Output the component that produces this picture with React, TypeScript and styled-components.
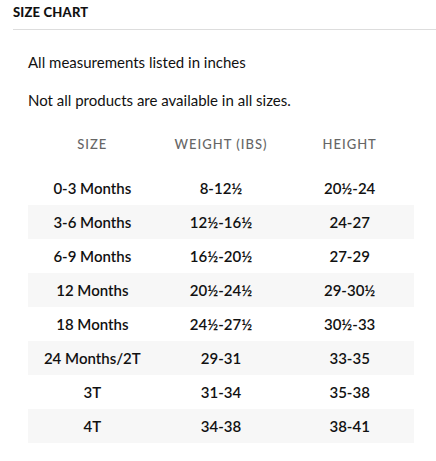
import React from "react";
import styled, { createGlobalStyle } from "styled-components";

const GlobalStyle = createGlobalStyle`
  body {
    margin: 0;
    background: #fff;
    font-family: "Lato", "Noto Sans", sans-serif;
    color: #111;
  }
`;

const Wrapper = styled.div`
  padding: 4px 0 0 13px;
  width: 423px;
`;

const Heading = styled.h3`
  margin: 0;
  font-size: 13px;
  font-weight: 900;
  letter-spacing: 0.2px;
  line-height: 16px;
  color: #111;
  padding-bottom: 9px;
  border-bottom: 1px solid #ddd;
`;

const Body = styled.div`
  padding: 0 22px 0 15px;
`;

const Note = styled.p<{ $top: number }>`
  margin: ${(p) => p.$top}px 0 0;
  font-size: 15px;
  line-height: 20px;
  color: #111;
`;

const Table = styled.table`
  width: 100%;
  margin-top: 17px;
  border-collapse: collapse;
`;

const HeadCell = styled.th`
  font-size: 13px;
  font-weight: 500;
  letter-spacing: 1px;
  color: #666;
  height: 34px;
  padding: 0 0 10px;
  text-align: center;
  vertical-align: middle;
`;

const Row = styled.tr<{ $shaded: boolean }>`
  background: ${(p) => (p.$shaded ? "#f7f7f7" : "transparent")};
`;

const Cell = styled.td`
  width: 33.33%;
  height: 34px;
  padding: 0;
  text-align: center;
  vertical-align: middle;
  font-size: 15px;
  font-weight: 600;
  color: #111;
`;

const rows = [
  ["0-3 Months", "8-12½", "20½-24"],
  ["3-6 Months", "12½-16½", "24-27"],
  ["6-9 Months", "16½-20½", "27-29"],
  ["12 Months", "20½-24½", "29-30½"],
  ["18 Months", "24½-27½", "30½-33"],
  ["24 Months/2T", "29-31", "33-35"],
  ["3T", "31-34", "35-38"],
  ["4T", "34-38", "38-41"],
];

const App: React.FC = () => {
  return (
    <>
      <GlobalStyle />
      <Wrapper>
        <Heading>SIZE CHART</Heading>
        <Body>
          <Note $top={22}>All measurements listed in inches</Note>
          <Note $top={18}>Not all products are available in all sizes.</Note>
          <Table>
            <thead>
              <tr>
                <HeadCell>SIZE</HeadCell>
                <HeadCell>WEIGHT (IBS)</HeadCell>
                <HeadCell>HEIGHT</HeadCell>
              </tr>
            </thead>
            <tbody>
              {rows.map((r, i) => (
                <Row key={r[0]} $shaded={i % 2 === 1}>
                  {r.map((c, j) => (
                    <Cell key={j}>{c}</Cell>
                  ))}
                </Row>
              ))}
            </tbody>
          </Table>
        </Body>
      </Wrapper>
    </>
  );
};

export default App;
